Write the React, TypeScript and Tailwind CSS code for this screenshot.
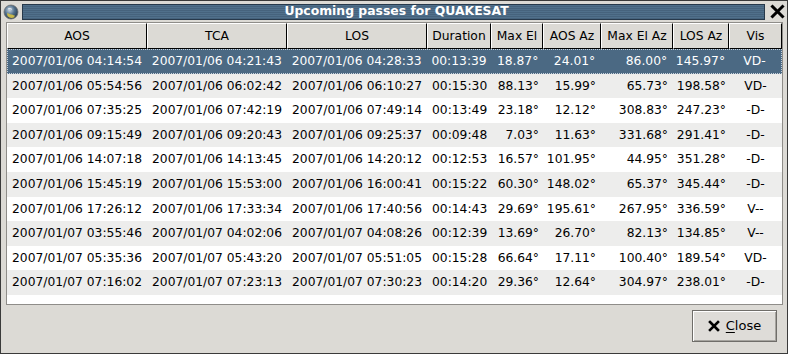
import React from "react";

const columns = [
  { title: "AOS", w: "w-[140px]", align: "text-left pl-[5px]" },
  { title: "TCA", w: "w-[140px]", align: "text-left pl-[5px]" },
  { title: "LOS", w: "w-[140px]", align: "text-left pl-[5px]" },
  { title: "Duration", w: "w-[64px]", align: "text-left pl-[5px]" },
  { title: "Max El", w: "w-[52px]", align: "text-right pr-[4px]" },
  { title: "AOS Az", w: "w-[58px]", align: "text-right pr-[5px]" },
  { title: "Max El Az", w: "w-[72px]", align: "text-right pr-[5px]" },
  { title: "LOS Az", w: "w-[56px]", align: "text-right pr-[3px]" },
  { title: "Vis", w: "w-[53px]", align: "text-center" },
];

const passes = [
  ["2007/01/06 04:14:54", "2007/01/06 04:21:43", "2007/01/06 04:28:33", "00:13:39", "18.87°", "24.01°", "86.00°", "145.97°", "VD-"],
  ["2007/01/06 05:54:56", "2007/01/06 06:02:42", "2007/01/06 06:10:27", "00:15:30", "88.13°", "15.99°", "65.73°", "198.58°", "VD-"],
  ["2007/01/06 07:35:25", "2007/01/06 07:42:19", "2007/01/06 07:49:14", "00:13:49", "23.18°", "12.12°", "308.83°", "247.23°", "-D-"],
  ["2007/01/06 09:15:49", "2007/01/06 09:20:43", "2007/01/06 09:25:37", "00:09:48", "7.03°", "11.63°", "331.68°", "291.41°", "-D-"],
  ["2007/01/06 14:07:18", "2007/01/06 14:13:45", "2007/01/06 14:20:12", "00:12:53", "16.57°", "101.95°", "44.95°", "351.28°", "-D-"],
  ["2007/01/06 15:45:19", "2007/01/06 15:53:00", "2007/01/06 16:00:41", "00:15:22", "60.30°", "148.02°", "65.37°", "345.44°", "-D-"],
  ["2007/01/06 17:26:12", "2007/01/06 17:33:34", "2007/01/06 17:40:56", "00:14:43", "29.69°", "195.61°", "267.95°", "336.59°", "V--"],
  ["2007/01/07 03:55:46", "2007/01/07 04:02:06", "2007/01/07 04:08:26", "00:12:39", "13.69°", "26.70°", "82.13°", "134.85°", "V--"],
  ["2007/01/07 05:35:36", "2007/01/07 05:43:20", "2007/01/07 05:51:05", "00:15:28", "66.64°", "17.11°", "100.40°", "189.54°", "VD-"],
  ["2007/01/07 07:16:02", "2007/01/07 07:23:13", "2007/01/07 07:30:23", "00:14:20", "29.36°", "12.64°", "304.97°", "238.01°", "-D-"],
];

export default function App() {
  return (
    <div className="w-[788px] h-[354px] bg-[#dcdad5] border border-[#3a3a3a] flex flex-col font-['DejaVu_Sans',sans-serif] text-[12.3px] text-black overflow-hidden">
      {/* TITLE BAR */}
      <div className="h-[21px] flex items-center pl-[2px] pr-[2px] gap-[3px]">
        <svg width="16" height="16" viewBox="0 0 16 16">
          <defs>
            <radialGradient id="globe" cx="0.4" cy="0.35" r="0.7">
              <stop offset="0" stopColor="#c9d6e3" />
              <stop offset="0.5" stopColor="#51708c" />
              <stop offset="1" stopColor="#1f3347" />
            </radialGradient>
          </defs>
          <circle cx="8" cy="8" r="7" fill="url(#globe)" stroke="#6d6d6d" strokeWidth="0.8" />
          <path d="M4 9.5 C5.5 8.5 7 11 8.5 10.5 C10 10 10.5 12 12 11.5 L11 13.5 C9 14.5 6 14 4.5 12 Z" fill="#c7b84a" />
          <path d="M5 5 C6.5 4 8 4.5 9 5.5" stroke="#e6ecf2" strokeWidth="1" fill="none" />
        </svg>
        <div className="flex-1 h-[16px] border border-[#27394b] bg-[repeating-linear-gradient(to_bottom,#50708b_0px,#50708b_1px,#46637d_1px,#46637d_2px)] flex items-center justify-center">
          <span className="text-white font-bold text-[12.4px] leading-none pl-[6px]">Upcoming passes for QUAKESAT</span>
        </div>
        <svg width="15" height="15" viewBox="0 0 15 15" className="ml-[2px]">
          <path d="M2.5 2.5 L12.5 12.5 M12.5 2.5 L2.5 12.5" stroke="#000" strokeWidth="3" strokeLinecap="square" />
        </svg>
      </div>

      {/* PASSES TABLE */}
      <div className="ml-[5px] w-[777px] h-[283px] border border-[#8f8d89] bg-white flex flex-col">
        <div className="flex h-[26px] shrink-0">
          {columns.map((c) => (
            <div
              key={c.title}
              className={`${c.w} h-full bg-[#dcdad5] border-t border-l border-t-white border-l-white border-r border-b border-r-black border-b-black flex items-center justify-center`}
            >
              {c.title}
            </div>
          ))}
        </div>
        {passes.map((row, i) => {
          const selected = i === 0;
          const shaded = i % 2 === 1;
          return (
            <div
              key={row[0]}
              className={`flex h-[24.6px] shrink-0 items-center ${
                selected
                  ? "bg-[#4b6983] text-white border border-dotted border-[#c8d2dc]"
                  : shaded
                  ? "bg-[#ededec]"
                  : "bg-white"
              }`}
            >
              {row.map((cell, j) => (
                <div key={j} className={`${columns[j].w} ${columns[j].align} whitespace-nowrap ${selected && j === 0 ? "-ml-px" : ""}`}>
                  {cell}
                </div>
              ))}
            </div>
          );
        })}
      </div>

      {/* FOOTER */}
      <div className="flex justify-end pr-[10px] pt-[5px]">
        <button className="w-[85px] h-[32px] bg-[#dedcd8] border border-[#6f6d69] shadow-[inset_1px_1px_0_#ffffff,inset_-1px_-1px_0_#a6a49f] flex items-center justify-center gap-[6px] text-[13px]">
          <svg width="12" height="12" viewBox="0 0 12 12">
            <path d="M2 2 L10 10 M10 2 L2 10" stroke="#000" strokeWidth="2.6" strokeLinecap="square" />
          </svg>
          <span>
            <span className="underline underline-offset-2">C</span>lose
          </span>
        </button>
      </div>
    </div>
  );
}
